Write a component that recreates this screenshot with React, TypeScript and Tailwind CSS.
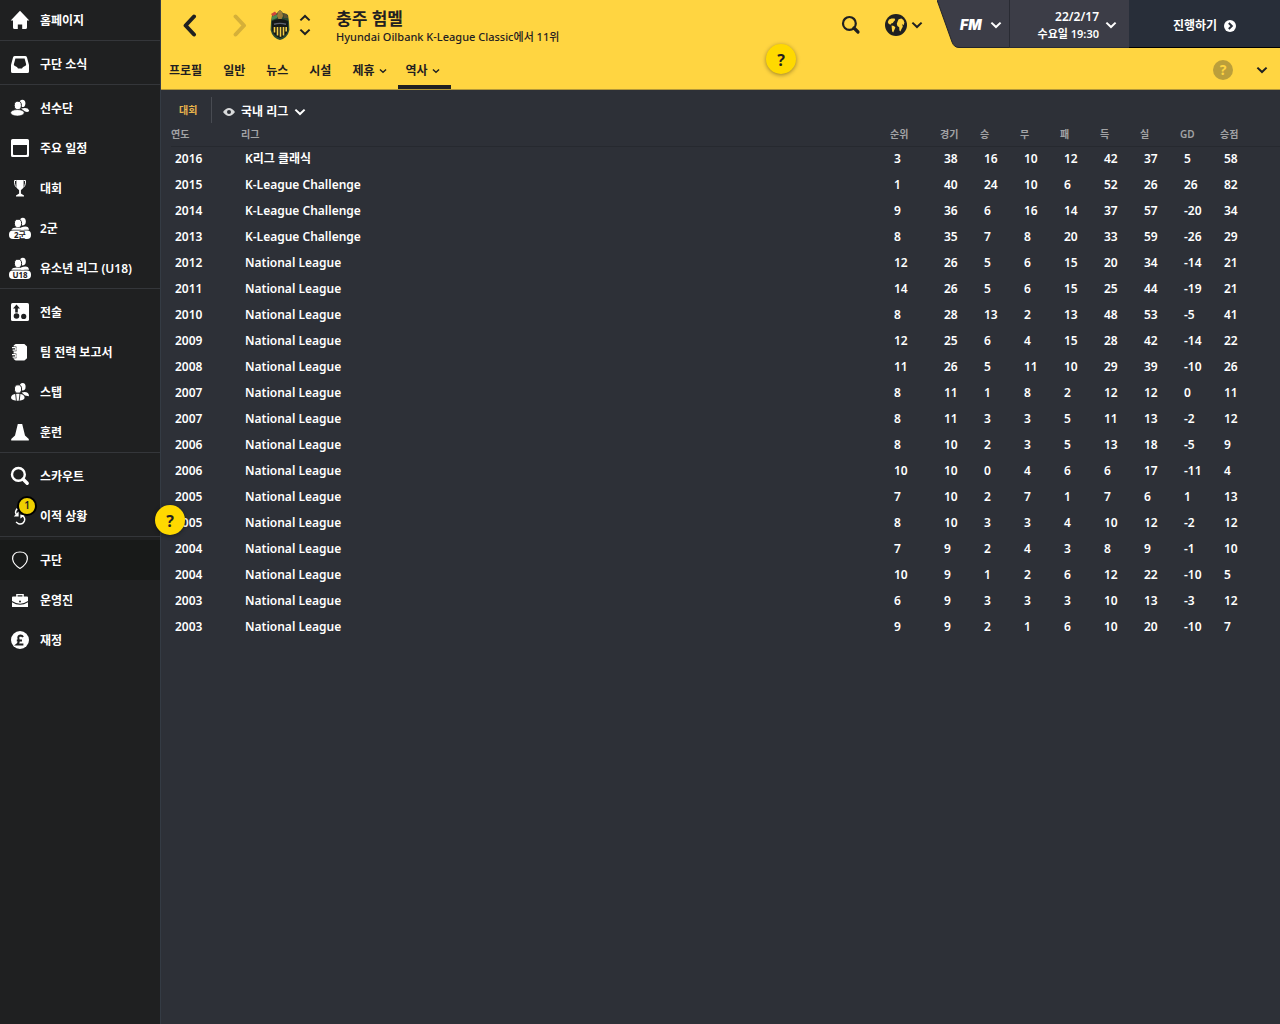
import type { ReactNode } from "react";

type Icon = () => ReactNode;

type MenuItem = {
  label: string;
  icon: Icon;
  active?: boolean;
  badge?: string;
};

const HomeIcon: Icon = () => (
  <svg viewBox="0 0 20 20" className="size-5" fill="#fff">
    <path d="M10 .8 19.3 10.6H17V17.4Q17 19 15.4 19H12.2V14.6H7.8V19H4.6Q3 19 3 17.4V10.6H.7Z" />
  </svg>
);

const InboxIcon: Icon = () => (
  <svg viewBox="0 0 20 20" className="size-5" fill="#fff">
    <path
      fillRule="evenodd"
      d="M5 2H15Q16.6 2 17 3.4L19 11V17.4Q19 19 17.4 19H2.6Q1 19 1 17.4V11L3 3.4Q3.4 2 5 2ZM5.4 4.6 3.8 10.6Q4 12.2 6 12.4Q7.4 13 8 14.4H12Q12.6 13 14 12.4Q16 12.2 16.2 10.6L14.6 4.6Z"
    />
  </svg>
);

const SquadIcon: Icon = () => (
  <svg viewBox="0 0 20 20" className="size-5" fill="#fff">
    <ellipse cx="12.4" cy="5.4" rx="3" ry="3.6" />
    <path d="M11 10.6Q17.6 8.6 19.2 12.4Q18.6 14.6 15 13.6Z" />
    <ellipse cx="7.8" cy="7.4" rx="3.6" ry="4.2" stroke="#1f2021" />
    <ellipse cx="7.4" cy="14.8" rx="6.8" ry="3.2" stroke="#1f2021" strokeWidth=".6" />
  </svg>
);

const CalendarIcon: Icon = () => (
  <svg viewBox="0 0 20 20" className="size-5" fill="#fff">
    <path
      fillRule="evenodd"
      d="M2.6 1H17.4Q19 1 19 2.6V17.4Q19 19 17.4 19H2.6Q1 19 1 17.4V2.6Q1 1 2.6 1ZM3 7V16Q3 17 4 17H16Q17 17 17 16V7Z"
    />
  </svg>
);

const TrophyIcon: Icon = () => (
  <svg viewBox="0 0 20 20" className="size-5">
    <path d="M6.4 2H13.6V7.6Q13.4 11 10.9 12.2V15.4L14 17.4V18.6H6V17.4L9.1 15.4V12.2Q6.6 11 6.4 7.6Z" fill="#fff" />
    <path d="M6.4 2.5H4.5Q4 8.4 8.2 10.4M13.6 2.5H15.5Q16 8.4 11.8 10.4" fill="none" stroke="#fff" />
  </svg>
);

function TeamIcon({ tag }: { tag: string }) {
  return (
    <svg viewBox="0 0 24 24" className="size-6" fill="#fff">
      <ellipse cx="14.8" cy="5.6" rx="3" ry="3.8" />
      <path d="M13 11.4Q20.6 8.6 21 13.8H13Z" />
      <ellipse cx="10" cy="7.4" rx="3.6" ry="4.2" stroke="#1f2021" />
      <path d="M3.4 13.8Q4.4 11.4 9.6 11.4T16.6 13.8Z" />
      <rect x="1" y="14.4" width="22" height="8.6" rx="4" />
      <text
        x="12"
        y="21.6"
        textAnchor="middle"
        fontSize="8"
        fontWeight="700"
        fill="#1f2021"
        className="font-['Noto_Sans','Noto_Sans_CJK_KR',sans-serif]"
      >
        {tag}
      </text>
    </svg>
  );
}

const TacticsIcon: Icon = () => (
  <svg viewBox="0 0 20 20" className="size-5">
    <rect x="1" y="1" width="18" height="18" rx="1.6" fill="#fff" />
    <path d="M6.5 2.6 10 6.6H7.8V10.4H5.2V6.6H3Z" fill="#1f2021" />
    <circle cx="6.5" cy="14" r="2.8" fill="#1f2021" />
    <circle cx="13.7" cy="14.4" r="2.6" fill="#1f2021" />
  </svg>
);

const ReportIcon: Icon = () => (
  <svg viewBox="0 0 20 20" className="size-5">
    <path d="M5.6 2H14.4L17 4.4V16.2L14.4 18.6H5.6L3.6 17V3.6Z" fill="#fff" />
    <path d="M1 4.6H6.4V9.2H1ZM1 11.6H6.4V16.2H1Z" fill="#1f2021" />
    <path
      d="M2 5.6H5.2Q6.6 6.9 5.2 8.2H2.6M2 12.6H5.2Q6.6 13.9 5.2 15.2H2.6"
      fill="none"
      stroke="#fff"
      strokeWidth="1.2"
    />
  </svg>
);

const StaffIcon: Icon = () => (
  <svg viewBox="0 0 20 20" className="size-5" fill="#fff">
    <ellipse cx="12.6" cy="4.8" rx="3" ry="3.8" />
    <path d="M11.6 10.4Q18.8 8.8 19 14.2L15 13.6Z" />
    <ellipse cx="8" cy="7" rx="3.6" ry="4.2" stroke="#1f2021" />
    <path d="M1 16Q1 11.8 7.8 11.8T14.6 16Q13.6 18.8 7.8 18.8T1 16Z" />
    <path d="M5.6 11.6 6.4 18.8M10 11.6 9.2 18.8" fill="none" stroke="#1f2021" strokeWidth=".9" />
  </svg>
);

const TrainingIcon: Icon = () => (
  <svg viewBox="0 0 20 20" className="size-5" fill="#fff">
    <path d="M7.8 2H12.2L15 13.6L18.8 17V18.6H1.2V17L5 13.6Z" />
  </svg>
);

const ScoutIcon: Icon = () => (
  <svg viewBox="0 0 20 20" className="size-5" fill="none" stroke="#fff">
    <circle cx="8.4" cy="8.4" r="6.4" strokeWidth="2.4" />
    <path d="M13.2 13.2 17.2 17.2" strokeWidth="3.4" strokeLinecap="round" />
  </svg>
);

const TransferIcon: Icon = () => (
  <svg viewBox="0 0 20 20" className="size-5" fill="none" stroke="#fff" strokeWidth="1.5">
    <path d="M7.4 2.6Q3.6 6.4 7.4 9.2" />
    <path d="M8.6 5.6V10.6H3.8Z" fill="#fff" stroke="none" />
    <path d="M12 9.4Q15.6 11.6 14.4 15Q12.6 19 8.6 17.8L6 16" />
    <path d="M10.4 12.6V8.6L14.6 9.4Z" fill="#fff" stroke="none" />
  </svg>
);

const ClubIcon: Icon = () => (
  <svg viewBox="0 0 20 20" className="size-5" fill="none" stroke="#fff" strokeWidth="1.2">
    <path d="M10 2Q14 2 15.4 3.6Q17.8 5.8 17.4 9Q16.6 14.6 10 18.4Q3.4 14.6 2.6 9Q2.2 5.8 4.6 3.6Q6 2 10 2Z" />
  </svg>
);

const BoardIcon: Icon = () => (
  <svg viewBox="0 0 20 20" className="size-5" fill="#fff">
    <path
      fillRule="evenodd"
      d="M6.2 4H13.8V6.6H17Q18 6.6 18 7.6V11Q14 13.6 10 13.8Q6 13.6 2 11V7.6Q2 6.6 3 6.6H6.2ZM7.6 5.2V6.6H12.4V5.2Z"
    />
    <path d="M2 12.2Q6 14.8 10 14.8Q14 14.8 18 12.2V17H2Z" />
    <circle cx="10" cy="11.6" r="1" fill="#1f2021" />
  </svg>
);

const FinanceIcon: Icon = () => (
  <svg viewBox="0 0 20 20" className="size-5">
    <circle cx="10" cy="10" r="9" fill="#fff" />
    <path
      d="M13 7Q12.2 5.4 10.4 5.4Q7.6 5.6 8.6 9.4Q9.2 13 7.2 14.4H13.4M6.8 10.4H12"
      fill="none"
      stroke="#1f2021"
      strokeWidth="2"
    />
  </svg>
);

const menu: MenuItem[][] = [
  [{ label: "홈페이지", icon: HomeIcon }],
  [{ label: "구단 소식", icon: InboxIcon }],
  [
    { label: "선수단", icon: SquadIcon },
    { label: "주요 일정", icon: CalendarIcon },
    { label: "대회", icon: TrophyIcon },
    { label: "2군", icon: () => <TeamIcon tag="2군" /> },
    { label: "유소년 리그 (U18)", icon: () => <TeamIcon tag="U18" /> },
  ],
  [
    { label: "전술", icon: TacticsIcon },
    { label: "팀 전력 보고서", icon: ReportIcon },
    { label: "스탭", icon: StaffIcon },
    { label: "훈련", icon: TrainingIcon },
  ],
  [
    { label: "스카우트", icon: ScoutIcon },
    { label: "이적 상황", icon: TransferIcon, badge: "1" },
  ],
  [
    { label: "구단", icon: ClubIcon, active: true },
    { label: "운영진", icon: BoardIcon },
    { label: "재정", icon: FinanceIcon },
  ],
];

const tabs = [
  { label: "프로필" },
  { label: "일반" },
  { label: "뉴스" },
  { label: "시설" },
  { label: "제휴", menu: true },
  { label: "역사", menu: true, active: true },
];

const columns = ["순위", "경기", "승", "무", "패", "득", "실", "GD", "승점"];

const seasons: [number, string, number[]][] = [
  [2016, "K리그 클래식", [3, 38, 16, 10, 12, 42, 37, 5, 58]],
  [2015, "K-League Challenge", [1, 40, 24, 10, 6, 52, 26, 26, 82]],
  [2014, "K-League Challenge", [9, 36, 6, 16, 14, 37, 57, -20, 34]],
  [2013, "K-League Challenge", [8, 35, 7, 8, 20, 33, 59, -26, 29]],
  [2012, "National League", [12, 26, 5, 6, 15, 20, 34, -14, 21]],
  [2011, "National League", [14, 26, 5, 6, 15, 25, 44, -19, 21]],
  [2010, "National League", [8, 28, 13, 2, 13, 48, 53, -5, 41]],
  [2009, "National League", [12, 25, 6, 4, 15, 28, 42, -14, 22]],
  [2008, "National League", [11, 26, 5, 11, 10, 29, 39, -10, 26]],
  [2007, "National League", [8, 11, 1, 8, 2, 12, 12, 0, 11]],
  [2007, "National League", [8, 11, 3, 3, 5, 11, 13, -2, 12]],
  [2006, "National League", [8, 10, 2, 3, 5, 13, 18, -5, 9]],
  [2006, "National League", [10, 10, 0, 4, 6, 6, 17, -11, 4]],
  [2005, "National League", [7, 10, 2, 7, 1, 7, 6, 1, 13]],
  [2005, "National League", [8, 10, 3, 3, 4, 10, 12, -2, 12]],
  [2004, "National League", [7, 9, 2, 4, 3, 8, 9, -1, 10]],
  [2004, "National League", [10, 9, 1, 2, 6, 12, 22, -10, 5]],
  [2003, "National League", [6, 9, 3, 3, 3, 10, 13, -3, 12]],
  [2003, "National League", [9, 9, 2, 1, 6, 10, 20, -10, 7]],
];

export default function App() {
  return (
    <div className="relative flex min-h-screen bg-[#2d3037] font-['Noto_Sans','Noto_Sans_CJK_KR',sans-serif] text-xs font-semibold text-white">
      <Sidebar />

      <div className="flex min-w-0 flex-1 flex-col border-l border-[#343b44]">
        <header className="relative border-b border-[#b3983a] bg-[#ffd541] text-[#1f2021]">
          <TitleBar />
          <TabBar />
          <HintBubble className="left-[605px] top-11" />
        </header>

        <main className="pl-2.5">
          <FilterBar />
          <HistoryTable />
        </main>
      </div>

      <HintBubble className="left-[155px] top-[505px]" />
    </div>
  );
}

function Sidebar() {
  return (
    <nav className="w-40 shrink-0 bg-[#1f2021]">
      {menu.map((group, index) => (
        <ul
          key={index}
          className={index > 0 ? "border-t border-[#34363a] pt-[3px]" : ""}
        >
          {group.map((item) => (
            <li key={item.label}>
              <a
                href="#"
                className={`relative flex h-10 items-center ${
                  item.active ? "bg-[#181a19]" : ""
                }`}
              >
                <span className="flex w-10 justify-center">
                  <item.icon />
                </span>
                <span className="pt-0.5">{item.label}</span>
                {item.badge && (
                  <span className="absolute left-[17px] top-0 flex size-5 items-center justify-center rounded-full border-2 border-black bg-[#efd000] text-[10px] text-[#1f2021]">
                    {item.badge}
                  </span>
                )}
              </a>
            </li>
          ))}
        </ul>
      ))}
    </nav>
  );
}

function TitleBar() {
  return (
    <div className="flex h-12 items-start">
      <button aria-label="뒤로" className="ml-5 mt-3.5">
        <svg viewBox="0 0 18 24" className="h-6 w-[18px]" fill="none" stroke="#1f2021" strokeWidth="4">
          <path d="M13 2.5 4.6 11.5 13 20.5" strokeLinecap="round" strokeLinejoin="round" />
        </svg>
      </button>
      <button aria-label="앞으로" className="ml-8 mt-3.5">
        <svg viewBox="0 0 18 24" className="h-6 w-[18px]" fill="none" stroke="#d5b039" strokeWidth="4">
          <path d="M4.6 2.5 13 11.5 4.6 20.5" strokeLinecap="round" strokeLinejoin="round" />
        </svg>
      </button>

      <Crest />

      <div className="ml-2 mt-3.5 flex flex-col gap-1.5">
        <button aria-label="이전 구단">
          <svg viewBox="0 0 12 8" className="h-2 w-3" fill="none" stroke="#1f2021" strokeWidth="2">
            <path d="M1.4 6.4 6 2 10.6 6.4" />
          </svg>
        </button>
        <button aria-label="다음 구단">
          <Chevron className="h-2 w-3" />
        </button>
      </div>

      <div className="ml-[25px] min-w-0 flex-1 pt-2">
        <h1 className="text-[17px] leading-[22px] font-bold">충주 험멜</h1>
        <p className="text-[11px] leading-[14px] font-medium">
          Hyundai Oilbank K-League Classic에서 11위
        </p>
      </div>

      <button aria-label="검색" className="mt-[15px]">
        <svg viewBox="0 0 20 20" className="size-5" fill="none" stroke="#1f2021">
          <circle cx="8.4" cy="8.4" r="6.4" strokeWidth="2.2" />
          <path d="M13 13 17 17" strokeWidth="3.2" strokeLinecap="round" />
        </svg>
      </button>
      <button aria-label="세계" className="ml-6 mt-3.5 flex items-center gap-1">
        <Globe />
        <Chevron className="h-2 w-3" />
      </button>

      <div className="ml-3.5 flex h-12 text-white">
        <button className="relative flex h-12 w-[72px] items-center gap-2 pt-0.5 pl-[23px]">
          <svg viewBox="0 0 72 48" className="absolute inset-0 h-12 w-[72px]">
            <path d="M0 0 15 42Q17 47.5 22 47.5H72V0Z" fill="#3c3d47" />
            <path d="M0 0 15 42Q17 47.5 22 47.5H72" fill="none" stroke="#23252a" />
          </svg>
          <span className="relative font-['Inter',sans-serif] text-sm leading-4 font-black italic">
            FM
          </span>
          <span className="relative">
            <Chevron className="h-2 w-3" />
          </span>
        </button>
        <button className="flex w-[120px] items-center justify-end gap-1.5 border-b border-l border-[#292b33] bg-[#3c3d47] pt-0.5 pr-3">
          <span className="pt-[3px] text-right">
            <span className="block leading-4">22/2/17</span>
            <span className="block text-[11px] leading-[18px]">수요일 19:30</span>
          </span>
          <Chevron className="h-2 w-3" />
        </button>
        <button className="flex w-[151px] items-center justify-center gap-[7px] border-b border-black bg-[#282e39] pt-1">
          진행하기
          <svg viewBox="0 0 12 12" className="size-3">
            <circle cx="6" cy="6" r="6" fill="#fff" />
            <path d="M4.8 3 7.8 6 4.8 9" fill="none" stroke="#282e39" strokeWidth="2" />
          </svg>
        </button>
      </div>
    </div>
  );
}

function TabBar() {
  return (
    <div className="flex h-[41px] items-stretch pr-3">
      {tabs.map((tab) => (
        <a
          key={tab.label}
          href="#"
          className={`flex items-center gap-1 border-b-4 pt-2 ${
            tab.active ? "border-[#1f2021]" : "border-transparent"
          } ${tab.menu ? "pr-[11px] pl-2" : "pr-[13px] pl-2"}`}
        >
          {tab.label}
          {tab.menu && <Chevron className="h-[6px] w-2" />}
        </a>
      ))}
      <div className="ml-auto flex items-center gap-[23px] pt-0.5">
        <button
          aria-label="도움말"
          className="flex size-5 items-center justify-center rounded-full bg-[#bb9f3b] text-sm font-bold text-[#ffd541]"
        >
          ?
        </button>
        <button aria-label="더 보기">
          <Chevron className="h-2 w-3" />
        </button>
      </div>
    </div>
  );
}

function FilterBar() {
  return (
    <div className="flex h-[35px] items-center pt-1">
      <a href="#" className="w-10 pt-0.5 pl-2 text-[10px] text-[#e9b54c]">
        대회
      </a>
      <button className="flex h-[26px] items-center gap-1.5 border-l border-[#484b52] pt-1 pl-[11px]">
        <svg viewBox="0 0 12 8" className="h-2 w-3">
          <path d="M0 4Q6-4 12 4Q6 12 0 4Z" fill="#d9dadb" />
          <circle cx="6" cy="4" r="2" fill="#2d3037" />
        </svg>
        국내 리그
        <Chevron className="h-2 w-3" />
      </button>
    </div>
  );
}

function HistoryTable() {
  return (
    <table className="w-full table-fixed text-left">
      <colgroup>
        <col className="w-[70px]" />
        <col />
        <col className="w-[50px]" />
        <col className="w-10" span={7} />
        <col className="w-[60px]" />
      </colgroup>
      <thead>
        <tr className="h-[21px] border-b border-[#26292f] text-[10px] leading-4 text-[#a2a3a5]">
          <th className="pb-[3px] font-semibold">연도</th>
          <th className="pb-[3px] font-semibold">리그</th>
          {columns.map((column) => (
            <th key={column} className="pb-[3px] font-semibold">
              {column}
            </th>
          ))}
        </tr>
      </thead>
      <tbody>
        {seasons.map(([year, league, stats], index) => (
          <tr key={index} className="h-[26px]">
            <td className="pl-1">{year}</td>
            <td className="pl-1">{league}</td>
            {stats.map((value, i) => (
              <td key={columns[i]} className="pl-1">
                {value}
              </td>
            ))}
          </tr>
        ))}
      </tbody>
    </table>
  );
}

function HintBubble({ className }: { className: string }) {
  return (
    <button
      className={`absolute flex size-[30px] items-center justify-center rounded-full bg-[#ffd900] pt-0.5 text-base font-bold text-[#1f2021] shadow-[0_1px_4px_rgba(0,0,0,0.4)] ${className}`}
    >
      ?
    </button>
  );
}

function Chevron({ className }: { className: string }) {
  return (
    <svg viewBox="0 0 12 8" className={className} fill="none" stroke="currentColor" strokeWidth="2">
      <path d="M1.4 1.6 6 6 10.6 1.6" />
    </svg>
  );
}

function Globe() {
  return (
    <svg viewBox="0 0 22 22" className="size-[22px]">
      <circle cx="11" cy="11" r="11" fill="#1f2021" />
      <g fill="#ffd541">
        <path d="M2.8 8 4 5.4 6.6 4.4 9.6 4.4 10.2 6 8.8 7.4 7.8 9 6.2 9.4 5.4 10.8 3.6 9.8Z" />
        <path d="M6.6 11.6 9 12 10.4 13.6 9.4 15.8 8.2 18.6 7.2 17.4 6.8 14.6Z" />
        <path d="M12.6 7.4 13.6 5.2 16.4 4.4 18.4 6 19.4 8.6 18.6 11.2 17.2 10 17.8 12.8 16.4 15.2 15.4 17.6 14.4 16.4 14.2 13.2 12.4 12 11.8 9.8Z" />
      </g>
    </svg>
  );
}

function Crest() {
  return (
    <svg viewBox="0 0 22 30" className="ml-5 mt-2.5 h-[30px] w-[22px]">
      <path d="M2 12 3 5 8 3 11 0 14 3 19 5 20 12 20.4 20Q18.6 28 11 30Q3.4 28 1.6 20Z" fill="#2b4a31" />
      <path d="M2 4 6 1.6 8 4 4 6.4Z" fill="#d0463b" />
      <path d="M3 6.4 8 4.4 8 8 3 10Z" fill="#4e8a4f" />
      <path d="M14 3 18 4 19 8 15 8Z" fill="#5c5230" />
      <path d="M9 1H13L14 6 12.6 9H9.4L8 6Z" fill="#9a7c39" />
      <path d="M3 11Q11 7 19 11V20Q17.4 26 11 28Q4.6 26 3 20Z" fill="#141817" />
      <path d="M5.5 17V22.6M8.5 17V25.6M11.5 17V26.8M14.5 17V25.4M17.2 17V21.6" stroke="#f0cd45" strokeWidth="1.6" />
      <path d="M5 14.2Q11 12.6 17 14.2" fill="none" stroke="#5d6270" strokeWidth="1.4" />
    </svg>
  );
}
